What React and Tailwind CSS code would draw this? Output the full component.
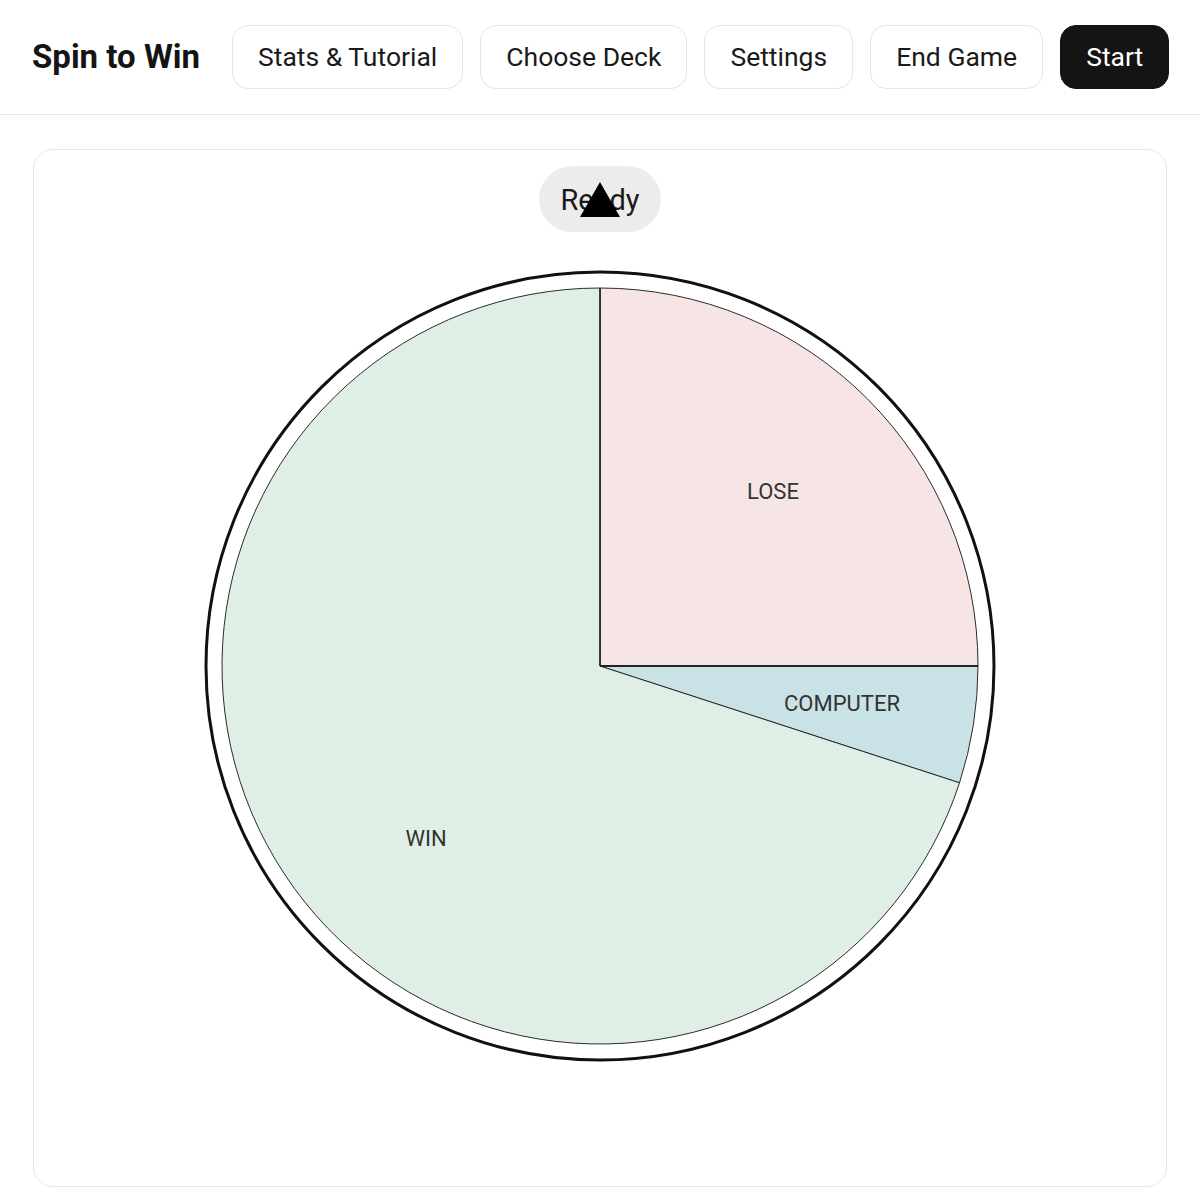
import { useState } from "react";

const slices = [
  { name: "LOSE", d: "M400,400 L400,22 A378,378 0 0 1 778,400 Z", fill: "#f6e5e4", lx: 573, ly: 225 },
  { name: "COMPUTER", d: "M400,400 L778,400 A378,378 0 0 1 759.5,516.8 Z", fill: "#c9e2e6", lx: 642, ly: 437 },
  { name: "WIN", d: "M400,400 L759.5,516.8 A378,378 0 1 1 400,22 Z", fill: "#e0efe5", lx: 226, ly: 572 },
];

const NavButton = ({ children, dark = false }) => (
  <button
    className={`h-16 px-[25px] shrink-0 whitespace-nowrap rounded-2xl text-[26.5px] leading-none border ${
      dark ? "bg-[#141414] border-[#141414] text-white" : "bg-white border-[#e6e6e6] text-[#1a1a1a]"
    }`}
  >
    {children}
  </button>
);

const Wheel = () => (
  <svg width="800" height="800" viewBox="0 0 800 800">
    <circle cx="400" cy="400" r="394" fill="white" stroke="#111" strokeWidth="3" />
    {slices.map((s) => (
      <path key={s.name} d={s.d} fill={s.fill} stroke="#2a2a2a" strokeWidth="1" />
    ))}
    <line x1="400" y1="400" x2="400" y2="22" stroke="#222" strokeWidth="1.5" />
    <line x1="400" y1="400" x2="778" y2="400" stroke="#222" strokeWidth="2" />
    {slices.map((s) => (
      <text
        key={s.name + "-label"}
        x={s.lx}
        y={s.ly}
        textAnchor="middle"
        dominantBaseline="central"
        fontFamily="Roboto, sans-serif"
        fontSize="22"
        fill="#333"
      >
        {s.name}
      </text>
    ))}
  </svg>
);

export default function App() {
  const [status] = useState("Ready");

  return (
    <div className="min-h-[1200px] bg-white font-['Roboto',sans-serif]">
      <header className="h-[115px] flex items-center gap-[17px] px-8 border-b border-[#e8e8e8]">
        <h1 className="text-[33px] font-bold text-[#141414] mr-[15px] whitespace-nowrap shrink-0">Spin to Win</h1>
        <NavButton>Stats &amp; Tutorial</NavButton>
        <NavButton>Choose Deck</NavButton>
        <NavButton>Settings</NavButton>
        <NavButton>End Game</NavButton>
        <NavButton dark>Start</NavButton>
      </header>

      <main className="px-[33px] pt-[34px]">
        <div className="h-[1038px] rounded-[20px] border border-[#e6e6e6] flex flex-col items-center pt-4">
          <div className="relative">
            <div className="h-[66px] px-[21px] pt-[3px] rounded-full bg-[#ececec] flex items-center text-[29px] text-[#1a1a1a]">
              {status}
            </div>
            {/* pointer sits over the status pill */}
            <svg
              className="absolute left-1/2 -translate-x-1/2 top-[16px]"
              width="40"
              height="36"
              viewBox="0 0 40 36"
            >
              <polygon points="20,0 40,35 0,35" fill="#000" />
            </svg>
          </div>
          <div className="mt-[34px]">
            <Wheel />
          </div>
        </div>
      </main>
    </div>
  );
}
